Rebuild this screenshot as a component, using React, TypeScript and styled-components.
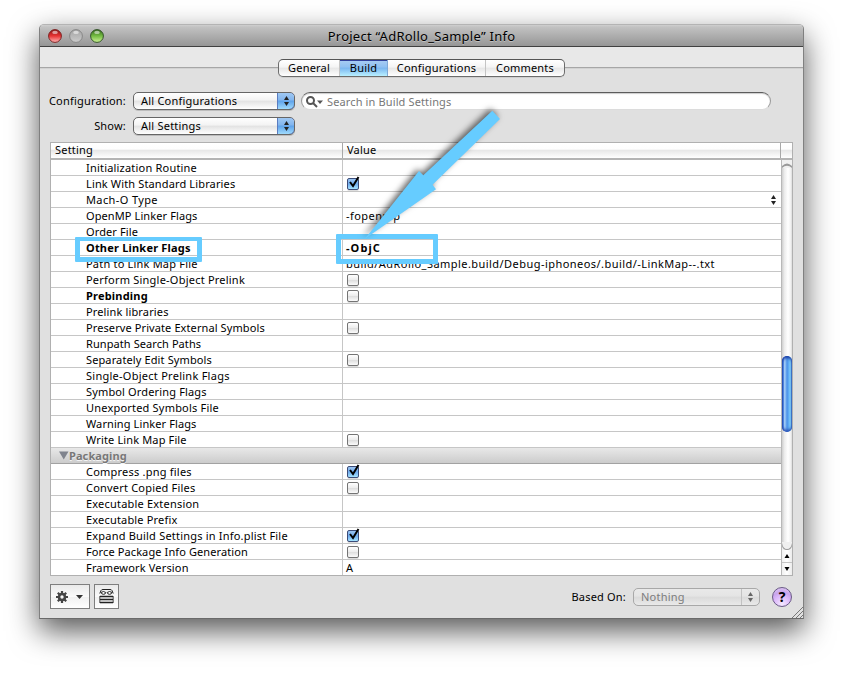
import React from "react";
import styled, { createGlobalStyle, css } from "styled-components";

const GlobalStyle = createGlobalStyle`
  * { box-sizing: border-box; }
  html, body { margin: 0; background: #fff; overflow: hidden; }
  body { font-family: "Noto Sans", "Open Sans", sans-serif; font-size: 11px; line-height: 16px; color: #000; }
`;

const Desktop = styled.main`
  width: 843px;
  height: 673px;
  padding: 24px 39px 54px 39px;
  background: #fff;
`;

const Window = styled.section`
  position: relative;
  width: 765px;
  height: 595px;
  display: flex;
  flex-direction: column;
  border: 1px solid #808080;
  border-top-color: #b4b4b4;
  border-bottom-color: #6a6a6a;
  border-radius: 5px 5px 0 0;
  background: #e0e0e0;
  box-shadow: 0 12px 30px rgba(0, 0, 0, 0.66);
`;

const TitleBar = styled.header`
  flex: none;
  height: 22px;
  display: grid;
  grid-template-columns: 70px 1fr 70px;
  align-items: center;
  border-bottom: 1px solid #404040;
  border-radius: 4px 4px 0 0;
  background: linear-gradient(#cfcfcf 0, #c2c2c2 2px, #969696 100%);
`;

const Lights = styled.div`
  display: flex;
  gap: 7px;
  padding-left: 8px;
  svg { display: block; }
`;

const Title = styled.h1`
  margin: 0;
  text-align: center;
  font-size: 13px;
  font-weight: 400;
  letter-spacing: 0.26px;
  line-height: 20px;
  text-shadow: 0 1px 0 rgba(255, 255, 255, 0.35);
`;

const TabStrip = styled.div`
  flex: none;
  height: 32px;
  padding: 12px 0 0 238px;
  background: linear-gradient(#e8e8e8 0 20px, #a6a6a6 20px 21px, #d2d2d2 21px 22px, #e0e0e0 22px);
`;

const Tabs = styled.nav`
  display: flex;
  width: 287px;
  height: 18px;
  border: 1px solid #6c6c6c;
  border-top-color: #555;
  border-radius: 5px;
  overflow: hidden;
  background: linear-gradient(#fff 0, #f4f4f4 45%, #e6e6e6 50%, #fff 100%);
  box-shadow: 0 1px 0 #cfcfcf;
`;

const Tab = styled.button<{ $w: number; $active?: boolean; $track?: number }>`
  flex: none;
  width: ${(p) => p.$w}px;
  padding: 0;
  border: 0;
  border-right: 1px solid #c4c4c4;
  background: none;
  font: inherit;
  line-height: 16px;
  color: inherit;
  letter-spacing: ${(p) => p.$track ?? 0.2}px;
  &:last-child { border-right: 0; }
  ${(p) => p.$active && css`
    border-right-color: #7fa9d8;
    background: linear-gradient(#a9cdf3 0, #8fc0f2 45%, #7ab6f0 50%, #b9f0ff 100%);
    box-shadow: inset 0 1px 0 #30409a;
  `}
`;

const Filters = styled.div`
  flex: none;
  display: grid;
  grid-template-columns: 86px 162px 470px;
  grid-template-rows: 18px 18px;
  column-gap: 7px;
  row-gap: 7px;
  height: 63px;
  padding-top: 13px;
`;

const Label = styled.label`
  text-align: right;
  line-height: 18px;
  letter-spacing: 0.2px;
  white-space: nowrap;
`;

const Popup = styled.div<{ $disabled?: boolean; $w: number }>`
  display: flex;
  justify-content: space-between;
  width: ${(p) => p.$w}px;
  height: 18px;
  padding-left: 7px;
  line-height: 16px;
  letter-spacing: 0.22px;
  border: 1px solid ${(p) => (p.$disabled ? "#a8a8a8" : "#666")};
  border-radius: 5px;
  overflow: hidden;
  color: ${(p) => (p.$disabled ? "#7d7d7d" : "#000")};
  background: ${(p) => p.$disabled
    ? "linear-gradient(#e9e9e9 0, #e4e4e4 45%, #dadada 50%, #e9e9e9 100%)"
    : "linear-gradient(#fff 0, #f3f3f3 45%, #e2e2e2 50%, #fff 100%)"};
  box-shadow: ${(p) => (p.$disabled ? "none" : "0 1px 0 #bdbdbd")};
`;

const PopupCap = styled.span<{ $disabled?: boolean }>`
  display: grid;
  place-items: center;
  width: 18px;
  margin: ${(p) => (p.$disabled ? "0" : "-1px -1px -1px 0")};
  border-left: 1px solid ${(p) => (p.$disabled ? "#c2c2c2" : "#5a7cc0")};
  border-radius: ${(p) => (p.$disabled ? "0" : "0 5px 5px 0")};
  background: ${(p) => (p.$disabled ? "none" : "linear-gradient(#a4cbf4 0, #82b5ee 45%, #5ea2ea 50%, #a8e2ff 100%)")};
  box-shadow: ${(p) => (p.$disabled ? "none" : "inset 0 1px 0 #26348c, inset -1px -1px 0 #4b5f9c")};
`;

const Search = styled.div`
  display: flex;
  align-items: center;
  gap: 4px;
  height: 18px;
  width: 470px;
  margin-left: -1px;
  padding: 1px 0 0 4px;
  border: 1px solid #9a9a9a;
  border-top-color: #5c5c5c;
  border-bottom-color: #dcdcdc;
  border-radius: 9px;
  background: #fff;
  box-shadow: inset 0 1px 1px #ccc;
  color: #777;
  letter-spacing: 0.13px;
`;

const Table = styled.div`
  flex: none;
  width: 743px;
  height: 434px;
  margin-left: 10px;
  border: 1px solid #b0b0b0;
  background: #fff;
`;

const HeadRow = styled.div`
  display: grid;
  grid-template-columns: 292px 438px 11px;
  height: 17px;
  border-bottom: 2px solid #b4b4b4;
  background: linear-gradient(#fff 0, #fdfdfd 40%, #e8e8e8 50%, #fff 100%);
`;

const HeadCell = styled.div`
  padding-left: 4px;
  border-right: 1px solid #a8a8a8;
  line-height: 14px;
  letter-spacing: 0.2px;
  &:last-child { border-right: 0; }
`;

const Body = styled.div`
  display: grid;
  grid-template-columns: 730px 11px;
  height: 415px;
`;

const Rows = styled.div`
  overflow: hidden;
`;

const Row = styled.div`
  display: grid;
  grid-template-columns: 292px 438px;
  height: 16px;
  border-bottom: 1px solid #c6c6c6;
`;

const Name = styled.div<{ $bold?: boolean; $track?: number }>`
  padding-left: 35px;
  border-right: 1px solid #c6c6c6;
  line-height: 16px;
  font-weight: ${(p) => (p.$bold ? 700 : 400)};
  letter-spacing: ${(p) => p.$track ?? 0.2}px;
  white-space: nowrap;
`;

const Value = styled.div<{ $bold?: boolean; $track?: number }>`
  display: flex;
  align-items: center;
  padding-left: 4px;
  line-height: 16px;
  font-weight: ${(p) => (p.$bold ? 700 : 400)};
  letter-spacing: ${(p) => p.$track ?? 0.2}px;
  white-space: nowrap;
`;

const ValueText = styled.span`
  margin-left: -1px;
`;

const Stepper = styled.span`
  display: flex;
  margin-left: auto;
  padding-right: 5px;
`;

const Group = styled.div`
  display: flex;
  align-items: center;
  height: 16px;
  padding-left: 8px;
  border-bottom: 1px solid #a2a2a2;
  background: linear-gradient(#e8e8e8, #cccccc);
  color: #777;
  font-weight: 700;
  letter-spacing: 0.1px;
  text-shadow: 0 1px 0 #f4f4f4;
`;

const Checkbox = styled.span<{ $on?: boolean }>`
  flex: none;
  width: 12px;
  height: 12px;
  border: 1px solid ${(p) => (p.$on ? "#3c4c78" : "#747474")};
  border-radius: 2px;
  background: ${(p) => p.$on
    ? "linear-gradient(#9cc5f2 0, #6fabee 50%, #a6e4ff 100%)"
    : "linear-gradient(#fff 0, #eee 45%, #dedede 52%, #fbfbfb 100%)"};
  box-shadow: 0 1px 0 #ddd;
  svg { display: block; margin: -3px 0 0 -1px; overflow: visible; }
`;

const ScrollBar = styled.div`
  display: flex;
  flex-direction: column;
  align-items: center;
  border-left: 1px solid #b8b8b8;
  background: linear-gradient(90deg, #cfcfcf 0, #ececec 25%, #fff 60%, #f2f2f2 85%, #dcdcdc 100%);
`;

const ScrollSpace = styled.div<{ $h: number }>`
  flex: none;
  width: 10px;
  height: ${(p) => p.$h}px;
`;

const TrackCap = styled.div`
  flex: none;
  width: 10px;
  height: 8px;
  background: #f0f0f0;
  svg { display: block; }
`;

const Thumb = styled.div`
  flex: none;
  width: 10px;
  height: 76px;
  border-radius: 5px;
  background: linear-gradient(90deg, #2450b8 0, #3f78da 12%, #a8d0f8 24%, #86baf2 36%, #4a90e8 50%, #62b0f4 68%, #8adcff 84%, #3a70c4 100%);
  box-shadow: inset 0 3px 3px -1px #1a3ca4, inset 0 -2px 3px #2a50b4;
`;

const ScrollArrows = styled.div`
  flex: none;
  width: 10px;
  height: 25px;
  background: linear-gradient(90deg, #f0f0f0, #fff 50%, #ececec);
  svg { display: block; }
`;

const Footer = styled.footer`
  flex: 1;
  display: flex;
  padding: 8px 16px 0 10px;
`;

const SquareButton = styled.button<{ $w: number }>`
  flex: none;
  display: flex;
  align-items: center;
  justify-content: center;
  gap: 8px;
  width: ${(p) => p.$w}px;
  height: 25px;
  margin-right: 4px;
  padding: 0 1px 0 0;
  border: 1px solid #7e7e7e;
  background: linear-gradient(#e9e9e9 0, #fafafa 50%, #f0f0f0 50%, #fff 100%);
`;

const BasedOn = styled.div`
  display: grid;
  grid-template-columns: auto 127px 20px;
  align-items: start;
  margin-left: auto;
  padding-top: 4px;
  column-gap: 7px;
`;

const Help = styled.button`
  width: 20px;
  height: 20px;
  margin: -1px 0 0 5px;
  padding: 0;
  border: 1px solid #6a5a86;
  border-radius: 50%;
  background: radial-gradient(circle at 50% 90%, #f4e8ff 0, #dcb8fa 45%, #c8a4ec 65%, #e4d2f6 100%);
  font: 700 14px/16px "Noto Sans", sans-serif;
  color: #000;
`;

const Grip = styled.svg`
  position: absolute;
  right: 0;
  bottom: 0;
`;

const Callout = styled.div<{ $x: number; $y: number; $w: number; $h: number; $t: number }>`
  position: absolute;
  left: ${(p) => p.$x}px;
  top: ${(p) => p.$y}px;
  width: ${(p) => p.$w}px;
  height: ${(p) => p.$h}px;
  border: 5px solid #66ccff;
  border-top-width: ${(p) => p.$t}px;
  border-radius: 1px;
`;

const Arrow = styled.svg`
  position: absolute;
  left: 310px;
  top: 75px;
  overflow: visible;
  filter: drop-shadow(-2px -2px 3px rgba(0, 0, 0, 0.6));
`;

type Setting = { name: string; bold?: boolean; track?: number; value?: string; vtrack?: number; check?: boolean; stepper?: boolean };

const linking: Setting[] = [
  { name: "Initialization Routine" },
  { name: "Link With Standard Libraries", track: 0.14, check: true },
  { name: "Mach-O Type", track: 0.38, stepper: true },
  { name: "OpenMP Linker Flags", track: 0.1, value: "-fopenmp", vtrack: 0.45 },
  { name: "Order File", track: 0.12 },
  { name: "Other Linker Flags", bold: true, value: "-ObjC", vtrack: 1.1 },
  { name: "Path to Link Map File", value: "build/AdRollo_Sample.build/Debug-iphoneos/.build/-LinkMap--.txt", vtrack: 0.45 },
  { name: "Perform Single-Object Prelink", track: 0.22, check: false },
  { name: "Prebinding", bold: true, check: false },
  { name: "Prelink libraries", track: 0.14 },
  { name: "Preserve Private External Symbols", track: 0.1, check: false },
  { name: "Runpath Search Paths", track: 0.08 },
  { name: "Separately Edit Symbols", track: 0.12, check: false },
  { name: "Single-Object Prelink Flags", track: 0.26 },
  { name: "Symbol Ordering Flags", track: 0.15 },
  { name: "Unexported Symbols File" },
  { name: "Warning Linker Flags", track: 0.1 },
  { name: "Write Link Map File", track: 0.14, check: false },
];

const packaging: Setting[] = [
  { name: "Compress .png files", track: 0.22, check: true },
  { name: "Convert Copied Files", check: false },
  { name: "Executable Extension" },
  { name: "Executable Prefix", track: 0.18 },
  { name: "Expand Build Settings in Info.plist File", track: 0.2, check: true },
  { name: "Force Package Info Generation", track: 0.11, check: false },
  { name: "Framework Version", track: 0.17, value: "A" },
];

const UpDown = ({ color = "#222", gap = 2 }: { color?: string; gap?: number }) => (
  <svg width="5" height={8 + gap} viewBox={`0 0 5 ${8 + gap}`} fill={color}>
    <path d="M2.5 0L5 4H0z" />
    <path d={`M0 ${4 + gap}H5L2.5 ${8 + gap}z`} />
  </svg>
);

const Light = ({ id, stops, rim }: { id: string; stops: [string, string, string]; rim: string }) => (
  <svg width="14" height="14" viewBox="0 0 14 14">
    <defs>
      <linearGradient id={id} x1="0" y1="0" x2="0" y2="1">
        <stop offset="0" stopColor={stops[0]} />
        <stop offset=".5" stopColor={stops[1]} />
        <stop offset="1" stopColor={stops[2]} />
      </linearGradient>
    </defs>
    <circle cx="7" cy="7" r="6.4" fill={`url(#${id})`} stroke={rim} strokeWidth="1" />
    <ellipse cx="7" cy="3.4" rx="2.8" ry="1.7" fill="#fff" opacity=".55" />
  </svg>
);

const SettingRow = ({ s }: { s: Setting }) => (
  <Row>
    <Name $bold={s.bold} $track={s.track}>{s.name}</Name>
    <Value $bold={s.bold} $track={s.vtrack}>
      {s.check !== undefined && (
        <Checkbox $on={s.check}>
          {s.check && (
            <svg width="13" height="13" viewBox="0 0 13 13" fill="none" stroke="#000" strokeWidth="2">
              <path d="M3 6l3 4L11.5 1" />
            </svg>
          )}
        </Checkbox>
      )}
      {s.value && <ValueText>{s.value}</ValueText>}
      {s.stepper && <Stepper><UpDown /></Stepper>}
    </Value>
  </Row>
);

export default function App() {
  return (
    <Desktop>
      <GlobalStyle />
      <Window>
        <TitleBar>
          <Lights>
            <Light id="close" stops={["#8a1414", "#e83434", "#ffb8b8"]} rim="#7c2424" />
            <Light id="minimize" stops={["#a4a4a4", "#b8b8b8", "#cccccc"]} rim="#878787" />
            <Light id="zoom" stops={["#34681a", "#74bc42", "#d0f498"]} rim="#34542a" />
          </Lights>
          <Title>Project “AdRollo_Sample” Info</Title>
        </TitleBar>
        <TabStrip>
          <Tabs>
            <Tab $w={61}>General</Tab>
            <Tab $w={48} $active>Build</Tab>
            <Tab $w={98}>Configurations</Tab>
            <Tab $w={78}>Comments</Tab>
          </Tabs>
        </TabStrip>
        <Filters>
          <Label>Configuration:</Label>
          <Popup $w={162}>All Configurations<PopupCap><UpDown /></PopupCap></Popup>
          <Search>
            <svg width="17" height="12" viewBox="0 0 17 12" fill="none" stroke="#555" strokeWidth="2">
              <circle cx="4.5" cy="4.5" r="3.5" />
              <path d="M7 7l4 4" />
              <path d="M11 4.5h6l-3 3.500z" fill="#555" stroke="none" />
            </svg>
            Search in Build Settings
          </Search>
          <Label>Show:</Label>
          <Popup $w={162}>All Settings<PopupCap><UpDown /></PopupCap></Popup>
        </Filters>
        <Table>
          <HeadRow>
            <HeadCell>Setting</HeadCell>
            <HeadCell>Value</HeadCell>
            <HeadCell />
          </HeadRow>
          <Body>
            <Rows>
              {linking.map((s) => <SettingRow key={s.name} s={s} />)}
              <Group>
                <svg width="10" height="9" viewBox="0 0 10 9"><path d="M0 .5h9.500l-4.750 8z" fill="#80848e" /></svg>
                Packaging
              </Group>
              {packaging.map((s) => <SettingRow key={s.name} s={s} />)}
            </Rows>
            <ScrollBar>
              <TrackCap>
                <svg width="10" height="8"><path d="M0 8V6Q5 1 10 6v2Q5 3.500 0 8z" fill="#999" /></svg>
              </TrackCap>
              <ScrollSpace $h={188} />
              <Thumb />
              <ScrollSpace $h={110} />
              <TrackCap>
                <svg width="10" height="8"><path d="M0 1Q1 7 5 7T10 1V4Q9 8 5 8T0 4z" fill="#999" /></svg>
              </TrackCap>
              <ScrollArrows>
                <svg width="10" height="25" viewBox="0 0 10 25">
                  <path d="M2.500 8L5 4l2.500 4zM2.500 17L5 21l2.500-4z" fill="#000" />
                  <path d="M0 12.500h10" stroke="#c4c4c4" />
                </svg>
              </ScrollArrows>
            </ScrollBar>
          </Body>
        </Table>
        <Footer>
          <SquareButton $w={40}>
            <svg width="12" height="12" viewBox="0 0 12 12" fill="none" stroke="#444">
              <circle cx="6" cy="6" r="3" strokeWidth="2.600" />
              <path d="M6 0v2.500M6 9.500V12M0 6h2.500M9.500 6H12M1.800 1.800l1.700 1.700M8.500 8.500l1.700 1.700M1.800 10.200l1.700-1.700M8.500 3.500l1.700-1.700" strokeWidth="2.200" />
            </svg>
            <svg width="7" height="4" viewBox="0 0 7 4"><path d="M0 0h7L3.500 4z" fill="#333" /></svg>
          </SquareButton>
          <SquareButton $w={25}>
            <svg width="15" height="15" viewBox="0 0 15 15" fill="none" stroke="#222">
              <path d="M.8 4.500L2 1.500Q2.500.5 4 .5h7q1.500 0 2 1l1.200 3" />
              <path d="M2 3.500Q4.500 1.500 6.800 3.500Q6.500 5.300 4.500 5.300T2 3.500zM8.200 3.500Q10.500 1.500 13 3.500Q12.500 5.300 10.500 5.300T8.200 3.500z" fill="#fff" />
              <path d="M1 7.500h13M1 10.500h13M1 13.500h13" strokeWidth="1.300" />
              <path d="M.8 7v7M14.200 7v7" strokeWidth=".8" />
            </svg>
          </SquareButton>
          <BasedOn>
            <Label>Based On:</Label>
            <Popup $w={127} $disabled>Nothing<PopupCap $disabled><UpDown color="#666" /></PopupCap></Popup>
            <Help>?</Help>
          </BasedOn>
        </Footer>
        <Grip width="11" height="11" viewBox="0 0 11 11" fill="none" stroke="#777">
          <path d="M0 11L11 0M4 11l7-7M8 11l3-3" />
        </Grip>
        <Callout $x={35} $y={212} $w={127} $h={25} $t={4} />
        <Callout $x={296} $y={209} $w={102} $h={30} $t={5} />
        <Arrow width="160" height="140" viewBox="350 100 160 140">
          <path d="M492.300 110.700L500 119L432.500 184.700L436 189.300L365 238.700L419 171L423.300 175.300z" fill="#66ccff" />
        </Arrow>
      </Window>
    </Desktop>
  );
}
